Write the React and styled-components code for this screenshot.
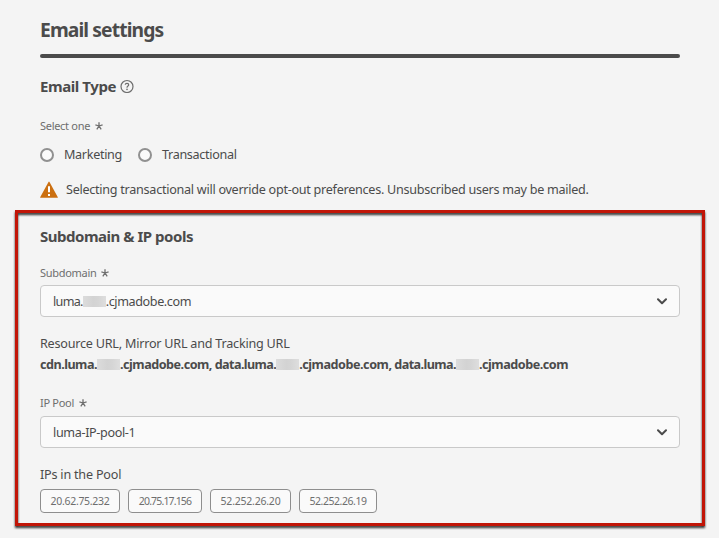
import React from 'react';
import styled, { createGlobalStyle } from 'styled-components';

const GlobalStyle = createGlobalStyle`
  * { box-sizing: border-box; }
  body {
    margin: 0;
    background: #f4f4f4;
    color: #4b4b4b;
    font-family: "Noto Sans", "Open Sans", sans-serif;
    overflow: hidden;
  }
`;

const Page = styled.main`
  display: flex;
  flex-direction: column;
  width: 719px;
  height: 538px;
  padding: 16px 14px 0 15px;
`;

const Header = styled.header`
  display: flex;
  flex-direction: column;
  justify-content: space-between;
  margin-left: 25px;
  width: 640px;
  height: 42px;
`;

const Title = styled.h1`
  margin: 0;
  font-size: 19.3px;
  line-height: 28px;
  letter-spacing: -0.89px;
  white-space: nowrap;
`;

const Rule = styled.div`
  height: 4px;
  border-radius: 2px;
  background: #4b4b4b;
`;

const TypeSection = styled.section`
  display: flex;
  flex-direction: column;
  padding: 17px 0 0 25px;
  height: 152px;
`;

const Heading = styled.h2`
  display: flex;
  align-items: center;
  gap: 4px;
  margin: 0;
  font-size: 15px;
  line-height: 22px;
  letter-spacing: ${(p) => p.$tracking}px;
  white-space: nowrap;
`;

const Label = styled.div`
  display: flex;
  align-items: center;
  gap: ${(p) => p.$gap || 5}px;
  height: 16px;
  color: #6e6e6e;
  font-size: 11px;
  line-height: 16px;
  letter-spacing: -0.3px;
  margin-top: ${(p) => p.$top}px;
`;

const Options = styled.div`
  display: flex;
  gap: 16px;
  margin-top: 10px;
`;

const Option = styled.label`
  display: flex;
  align-items: center;
  gap: 10px;
  height: 20px;
  font-size: 12.6px;
  letter-spacing: -0.32px;
`;

const Radio = styled.input`
  appearance: none;
  width: 14px;
  height: 14px;
  margin: 1px 0 0;
  border: 2px solid #909090;
  border-radius: 50%;
  background: #fafafa;
`;

const Warning = styled.p`
  display: flex;
  align-items: center;
  gap: 8px;
  height: 20px;
  margin: 15px 0 0;
  font-size: 12.6px;
  letter-spacing: -0.27px;
  white-space: nowrap;
`;

const Highlight = styled.section`
  position: relative;
  width: 690px;
  height: 316px;
  padding: 15px 25px 0;

  &::after {
    content: "";
    position: absolute;
    inset: 0;
    border: 3px solid #c11507;
    filter: drop-shadow(0 2px 1px rgba(0, 0, 0, 0.8));
    pointer-events: none;
  }
`;

const Select = styled.button`
  display: flex;
  align-items: center;
  justify-content: space-between;
  width: 640px;
  height: 32px;
  margin-top: ${(p) => p.$top}px;
  padding: 0 12px;
  border: 1px solid #c9c9c9;
  border-radius: 4px;
  background: #fafafa;
  color: #4b4b4b;
  font-family: inherit;
  font-size: 12.6px;
`;

const Line = styled.div`
  display: flex;
  align-items: center;
  height: 20px;
  margin-top: ${(p) => p.$top || 0}px;
  font-size: 12.6px;
  font-weight: ${(p) => (p.$bold ? 700 : 400)};
`;

const Text = styled.span`
  white-space: pre;
  letter-spacing: ${(p) => p.$tracking}px;
`;

const Redacted = styled.span`
  width: 23px;
  height: 11px;
  background: linear-gradient(90deg, #dcdcdc, #d3d3d3 45%, #d5d5d5 65%, #dedede);
`;

const Tags = styled.div`
  display: flex;
  gap: 8px;
  margin-top: 5px;
`;

const Tag = styled.span`
  display: flex;
  align-items: center;
  justify-content: center;
  width: ${(p) => p.$width}px;
  height: 24px;
  border: 1px solid #8e8e8e;
  border-radius: 4px;
  background: #fafafa;
  color: #6e6e6e;
  font-size: 10.5px;
  letter-spacing: ${(p) => p.$tracking}px;
`;

const Asterisk = () => (
  <svg width="8" height="8" viewBox="0 0 8 8" fill="none" stroke="#6e6e6e" strokeWidth="1.3">
    <path d="M4 4V.2M4 4 .4 2.9M4 4 7.6 2.9M4 4 1.8 7.3M4 4 6.2 7.3" />
  </svg>
);

const HelpIcon = () => (
  <svg width="14" height="14" viewBox="0 0 14 14" fill="none" stroke="#6e6e6e">
    <circle cx="7" cy="7.5" r="6" strokeWidth="1.2" />
    <path d="M5.2 5.7C5.4 3.8 8.7 3.9 8.7 5.8 8.7 7.1 7 7.1 7 8.7" strokeWidth="1.2" />
    <circle cx="7" cy="10.4" r=".8" fill="#6e6e6e" stroke="none" />
  </svg>
);

const AlertIcon = () => (
  <svg width="18" height="17" viewBox="0 0 18 17">
    <path d="M8.5.9a.6.6 0 0 1 1 0l8.2 15a.6.6 0 0 1-.5.9H.8a.6.6 0 0 1-.5-.9Z" fill="#cb6f10" />
    <path d="M8 5.3h2v6H8zM8 13h2v2H8z" fill="#fff" />
  </svg>
);

const Chevron = () => (
  <svg width="10" height="7" viewBox="0 0 10 7" fill="none" stroke="#4b4b4b" strokeWidth="2" strokeLinecap="round" strokeLinejoin="round">
    <path d="m1 1.2 4 4 4-4" />
  </svg>
);

const pool = [
  { ip: '20.62.75.232', width: 80, tracking: -0.3 },
  { ip: '20.75.17.156', width: 74, tracking: -0.85 },
  { ip: '52.252.26.20', width: 81, tracking: -0.22 },
  { ip: '52.252.26.19', width: 78, tracking: -0.45 },
];

export default function App() {
  return (
    <>
      <GlobalStyle />
      <Page>
        <Header>
          <Title>Email settings</Title>
          <Rule />
        </Header>
        <TypeSection>
          <Heading $tracking={-0.42}>
            Email Type <HelpIcon />
          </Heading>
          <Label $top={21}>Select one <Asterisk /></Label>
          <Options>
            <Option><Radio type="radio" name="type" />Marketing</Option>
            <Option><Radio type="radio" name="type" />Transactional</Option>
          </Options>
          <Warning>
            <AlertIcon />
            Selecting transactional will override opt-out preferences. Unsubscribed users may be mailed.
          </Warning>
        </TypeSection>
        <Highlight>
          <Heading $tracking={-0.48}>Subdomain &amp; IP pools</Heading>
          <Label $top={18}>Subdomain <Asterisk /></Label>
          <Select $top={4}>
            <Line>
              <Text $tracking={-0.7}>luma.</Text>
              <Redacted />
              <Text $tracking={-0.4}>.cjmadobe.com</Text>
            </Line>
            <Chevron />
          </Select>
          <Line $top={16}>
            <Text $tracking={-0.22}>Resource URL, Mirror URL and Tracking URL</Text>
          </Line>
          <Line $top={1} $bold>
            <Text $tracking={-0.5}>cdn.luma.</Text>
            <Redacted />
            <Text $tracking={-0.48}>.cjmadobe.com, </Text>
            <Text $tracking={-0.6}>data.luma.</Text>
            <Redacted />
            <Text $tracking={-0.45}>.cjmadobe.com, </Text>
            <Text $tracking={-0.58}>data.luma.</Text>
            <Redacted />
            <Text $tracking={-0.46}>.cjmadobe.com</Text>
          </Line>
          <Label $top={21}>IP Pool <Asterisk /></Label>
          <Select $top={5}>
            <Text $tracking={-0.36}>luma-IP-pool-1</Text>
            <Chevron />
          </Select>
          <Line $top={16}>
            <Text $tracking={-0.21}>IPs in the Pool</Text>
          </Line>
          <Tags>
            {pool.map((t) => (
              <Tag key={t.ip} $width={t.width} $tracking={t.tracking}>{t.ip}</Tag>
            ))}
          </Tags>
        </Highlight>
      </Page>
    </>
  );
}
